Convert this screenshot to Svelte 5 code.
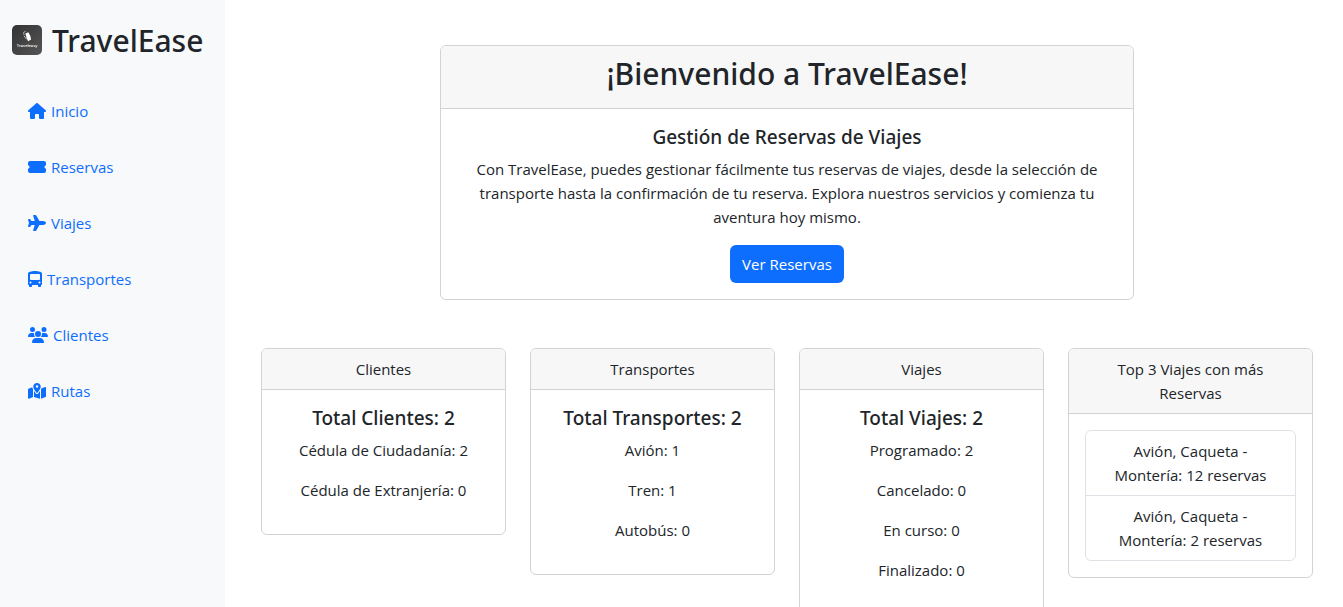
<script>
  const links = [
    { label: 'Inicio', width: 576, path: 'M575.8 255.5c0 18-15 32.1-32 32.1h-32l.7 160.2c0 2.7-.2 5.4-.5 8.1V472c0 22.1-17.9 40-40 40H456c-1.1 0-2.2 0-3.3-.1c-1.4 .1-2.8 .1-4.2 .1H416 392c-22.1 0-40-17.9-40-40V448 384c0-17.7-14.3-32-32-32H256c-17.7 0-32 14.3-32 32v64 24c0 22.1-17.9 40-40 40H160 128.1c-1.5 0-3-.1-4.5-.2c-1.2 .1-2.4 .2-3.6 .2H104c-22.1 0-40-17.9-40-40V360c0-.9 0-1.9 .1-2.8V287.6H32c-18 0-32-14-32-32.1c0-9 3-17 10-24L266.4 8c7-7 15-8 22-8s15 2 21 7L564.8 231.5c8 7 12 15 11 24z' },
    { label: 'Reservas', width: 576, path: 'M0 128C0 92.7 28.7 64 64 64H512c35.3 0 64 28.7 64 64v64c0 8.8-7.4 15.7-15.7 18.6C541.5 217.1 528 235 528 256s13.5 38.9 32.3 45.4c8.3 2.9 15.7 9.8 15.7 18.6v64c0 35.3-28.7 64-64 64H64c-35.3 0-64-28.7-64-64V320c0-8.8 7.4-15.7 15.7-18.6C34.5 294.9 48 277 48 256s-13.5-38.9-32.3-45.4C7.4 207.7 0 200.8 0 192V128z' },
    { label: 'Viajes', width: 576, path: 'M482.3 192c34.2 0 93.7 29 93.7 64c0 36-59.5 64-93.7 64l-116.6 0L265.2 495.9c-5.7 10-16.3 16.1-27.8 16.1l-56.2 0c-10.6 0-18.3-10.2-15.4-20.4l49-171.6L112 320 68.8 377.6c-3 4-7.8 6.4-12.8 6.4l-42 0c-7.8 0-14-6.3-14-14c0-1.3 .2-2.6 .5-3.9L32 256 .5 145.9c-.4-1.3-.5-2.6-.5-3.9c0-7.8 6.3-14 14-14l42 0c5 0 9.8 2.4 12.8 6.4L112 192l102.9 0-49-171.6C162.9 10.2 170.6 0 181.2 0l56.2 0c11.5 0 22.1 6.2 27.8 16.1L365.7 192l116.6 0z' },
    { label: 'Transportes', width: 448, path: 'M224 0C348.8 0 448 35.2 448 80V96 416c0 17.7-14.3 32-32 32v32c0 17.7-14.3 32-32 32H352c-17.7 0-32-14.3-32-32V448H128v32c0 17.7-14.3 32-32 32H64c-17.7 0-32-14.3-32-32l0-32c-17.7 0-32-14.3-32-32V96 80C0 35.2 99.2 0 224 0zM64 128V256c0 17.7 14.3 32 32 32H352c17.7 0 32-14.3 32-32V128c0-17.7-14.3-32-32-32H96c-17.7 0-32 14.3-32 32zM80 400a32 32 0 1 0 0-64 32 32 0 1 0 0 64zm288 0a32 32 0 1 0 0-64 32 32 0 1 0 0 64z' },
    { label: 'Clientes', width: 640, path: 'M144 0a80 80 0 1 1 0 160A80 80 0 1 1 144 0zM512 0a80 80 0 1 1 0 160A80 80 0 1 1 512 0zM0 298.7C0 239.8 47.8 192 106.7 192h42.7c15.9 0 31 3.5 44.6 9.7c-1.3 7.2-1.9 14.7-1.9 22.3c0 38.2 16.8 72.5 43.3 96c-.2 0-.4 0-.7 0H21.3C9.6 320 0 310.4 0 298.7zM405.3 320c-.2 0-.4 0-.7 0c26.6-23.5 43.3-57.8 43.3-96c0-7.6-.7-15-1.9-22.3c13.6-6.3 28.7-9.7 44.6-9.7h42.7C592.2 192 640 239.8 640 298.7c0 11.8-9.6 21.3-21.3 21.3H405.3zM224 224a96 96 0 1 1 192 0 96 96 0 1 1 -192 0zM128 485.3C128 411.7 187.7 352 261.3 352H378.7C452.3 352 512 411.7 512 485.3c0 14.7-11.9 26.7-26.7 26.7H154.7c-14.7 0-26.7-11.9-26.7-26.7z' },
    { label: 'Rutas', width: 576, path: 'M408 120c0 54.6-73.1 151.9-105.2 192c-7.7 9.6-22 9.6-29.6 0C241.1 271.9 168 174.6 168 120C168 53.7 221.7 0 288 0s120 53.7 120 120zm8 80.4c3.5-6.9 6.7-13.8 9.6-20.6c.5-1.2 1-2.5 1.5-3.7l116-46.4C558.9 123.4 576 135 576 152V422.8c0 9.8-6 18.6-15.1 22.3L416 503V200.4zM137.6 138.3c2.4 14.1 7.2 28.3 12.8 41.5c2.9 6.8 6.1 13.7 9.6 20.6V451.8L32.9 502.7C17.1 509 0 497.4 0 480.4V209.6c0-9.8 6-18.6 15.1-22.3l122.6-49zM327.8 332c13.9-17.4 35.7-45.7 56.2-77V504.3L192 449.4V255c20.5 31.3 42.3 59.6 56.2 77c20.5 25.6 59.1 25.6 79.6 0zM288 152a40 40 0 1 0 0-80 40 40 0 1 0 0 80z' }
  ];

  const stats = [
    { title: 'Clientes', total: 'Total Clientes: 2', rows: ['Cédula de Ciudadanía: 2', 'Cédula de Extranjería: 0'] },
    { title: 'Transportes', total: 'Total Transportes: 2', rows: ['Avión: 1', 'Tren: 1', 'Autobús: 0'] },
    { title: 'Viajes', total: 'Total Viajes: 2', rows: ['Programado: 2', 'Cancelado: 0', 'En curso: 0', 'Finalizado: 0'] }
  ];

  const topTrips = [
    { name: 'Avión, Caqueta - Montería', count: 12 },
    { name: 'Avión, Caqueta - Montería', count: 2 }
  ];
</script>

<div class="page">
  <aside class="sidebar">
    <div class="brand">
      <svg class="logo" viewBox="0 0 30 30" aria-hidden="true">
        <defs>
          <linearGradient id="logo-bg" x1="0" y1="0" x2="1" y2="1">
            <stop offset="0" stop-color="#333" />
            <stop offset="1" stop-color="#555" />
          </linearGradient>
        </defs>
        <rect width="30" height="30" rx="5" fill="url(#logo-bg)" />
        <path d="M13.4 8.4l2.9-1.2 2 3.6.8 3.8-3 1.6-1.6-3.4z" fill="#fff" />
        <path d="M13.6 6.3c-2 .4-2.6 2.2-1.3 3.5M12 10.8l2.7 3.6" fill="none" stroke="#ddd" stroke-width=".8" />
        <text x="15" y="22" text-anchor="middle" fill="#fff">Traveleasy</text>
      </svg>
      <span class="name">TravelEase</span>
    </div>
    <nav>
      {#each links as link}
        <a href="#{link.label.toLowerCase()}">
          <svg viewBox="0 0 {link.width} 512" height="16" width={link.width / 32} aria-hidden="true">
            <path d={link.path} />
          </svg>
          {link.label}
        </a>
      {/each}
    </nav>
  </aside>

  <main>
    <section class="card hero">
      <header><h1>¡Bienvenido a TravelEase!</h1></header>
      <div class="body">
        <h2>Gestión de Reservas de Viajes</h2>
        <p>
          Con TravelEase, puedes gestionar fácilmente tus reservas de viajes, desde la selección de
          transporte hasta la confirmación de tu reserva. Explora nuestros servicios y comienza tu
          aventura hoy mismo.
        </p>
        <button type="button">Ver Reservas</button>
      </div>
    </section>

    {#each stats as stat}
      <section class="card">
        <header>{stat.title}</header>
        <div class="body">
          <h2>{stat.total}</h2>
          {#each stat.rows as row}
            <p>{row}</p>
          {/each}
        </div>
      </section>
    {/each}

    <section class="card">
      <header>Top 3 Viajes con más Reservas</header>
      <div class="body">
        <ul>
          {#each topTrips as trip}
            <li>{trip.name}: {trip.count} reservas</li>
          {/each}
        </ul>
      </div>
    </section>
  </main>
</div>

<style>
  :global(body) {
    margin: 0;
    background: #fff;
  }
  .page {
    display: flex;
    min-height: 100vh;
    color: #212529;
    font: 400 15px/24px 'Segoe UI', 'Open Sans', 'Noto Sans', sans-serif;
  }
  .page * {
    box-sizing: border-box;
  }
  .sidebar {
    flex: 0 0 225px;
    padding: 20px 12px;
    background: #f8f9fa;
  }
  .brand {
    display: flex;
    align-items: center;
    gap: 10px;
    height: 40px;
    margin-bottom: 31px;
  }
  .logo {
    width: 30px;
    height: 30px;
  }
  .logo text {
    font: 600 4px 'Open Sans', sans-serif;
  }
  .name,
  h1 {
    font-family: 'Segoe UI', 'Noto Sans', 'Open Sans', sans-serif;
    font-size: 30px;
    font-weight: 500;
    line-height: 40px;
  }
  .name {
    padding-top: 2px;
  }
  nav {
    display: flex;
    flex-direction: column;
    gap: 16px;
  }
  nav a {
    display: flex;
    align-items: center;
    gap: 5px;
    padding: 8px 16px;
    color: #0d6efd;
    text-decoration: none;
  }
  nav svg {
    flex: none;
    fill: currentColor;
  }
  main {
    flex: 1;
    min-width: 0;
    display: grid;
    grid-template-columns: repeat(12, minmax(0, 1fr));
    align-items: start;
    align-content: start;
    column-gap: 24px;
    row-gap: 48px;
    padding: 45px 30px 0 36px;
  }
  .card {
    grid-column: span 3;
    border: 1px solid #d3d3d4;
    border-radius: 6px;
    overflow: hidden;
    text-align: center;
  }
  .hero {
    grid-column: 3 / span 8;
  }
  header {
    padding: 8px 16px;
    border-bottom: 1px solid #d3d3d4;
    background: #f7f7f7;
  }
  .body {
    padding: 16px;
  }
  h1 {
    margin: 0 0 6px;
  }
  h2 {
    margin: 0 0 8px;
    font-family: 'Segoe UI', 'Noto Sans', 'Open Sans', sans-serif;
    font-size: 19px;
    font-weight: 500;
    line-height: 24px;
  }
  p {
    margin: 0 0 16px;
  }
  button {
    height: 38px;
    padding: 0 12px;
    border: 0;
    border-radius: 6px;
    background: #0d6efd;
    color: #fff;
    font: inherit;
  }
  ul {
    margin: 0;
    padding: 0;
    border: 1px solid #dee2e6;
    border-radius: 6px;
    list-style: none;
  }
  li {
    padding: 8px 16px;
  }
  li + li {
    border-top: 1px solid #dee2e6;
  }
</style>
